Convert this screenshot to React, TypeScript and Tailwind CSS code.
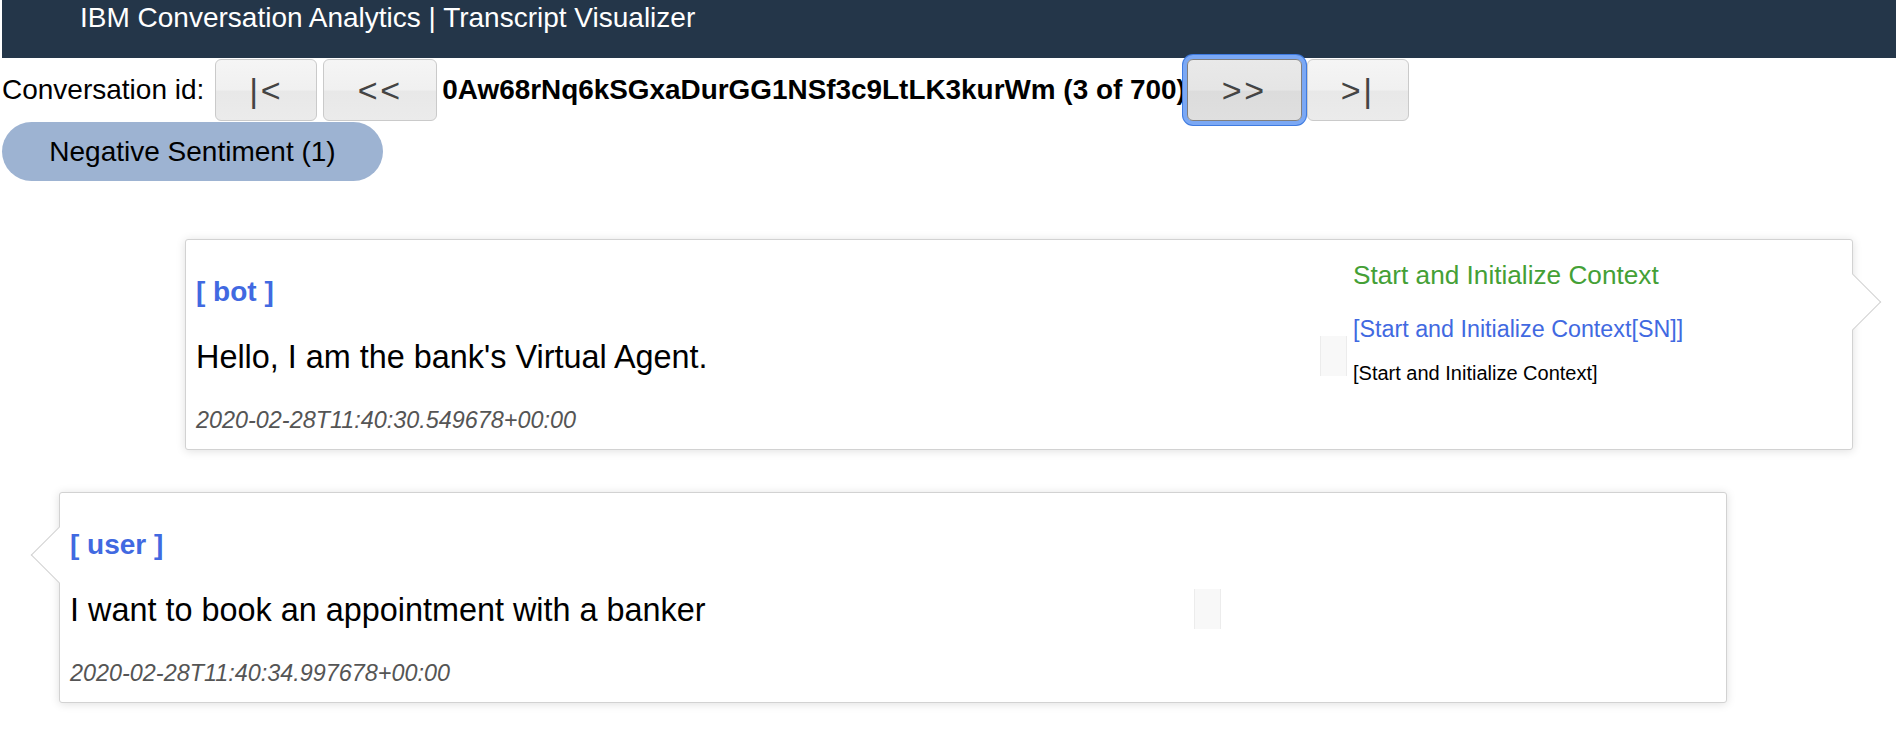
import React from "react";

function NavButton({
  className,
  children,
}: {
  className: string;
  children: React.ReactNode;
}) {
  return (
    <button
      type="button"
      className={
        "flex h-[62px] shrink-0 items-center justify-center rounded-[6px] border text-[34px] leading-none tracking-[0.08em] text-[#444] " +
        className
      }
    >
      {children}
    </button>
  );
}

const plainBtn =
  "border-[#cacaca] bg-[linear-gradient(#f5f5f5_0%,#f0f0f0_50%,#e8e8e8_52%,#ebebeb_100%)]";
const focusBtn =
  "relative z-10 border-[#7f7f7f] bg-[linear-gradient(#e9e9e9_0%,#e5e5e5_50%,#dcdcdc_52%,#dfdfdf_100%)] shadow-[0_0_0_4px_#7ba8f4,0_0_0_5px_#3f7be0]";

function Card({
  wrap,
  arrow,
  label,
  text,
  time,
  right,
}: {
  wrap: string;
  arrow: string;
  label: string;
  text: string;
  time: string;
  right?: boolean;
}) {
  return (
    <div
      className={
        "relative w-[1668px] rounded-[3px] border border-[#d2d2d2] bg-white shadow-[0_1px_10px_rgba(0,0,0,0.13)] " +
        wrap
      }
    >
      <div className={"absolute top-[42px] h-[40px] w-[40px] rotate-45 border-[#d2d2d2] bg-white " + arrow} />
      <div className="relative flex px-[10px]">
        <div className="w-[1124px] shrink-0 pb-[16px] pt-[36px]">
          <p className="text-[28px] font-bold leading-[32px] text-[#4169e1]">{label}</p>
          <p className="mt-[31px] text-[32.4px] leading-[37px]">{text}</p>
          <p className="mt-[31px] text-[23.4px] italic leading-[26px] text-[#555]">{time}</p>
        </div>
        <div className="mt-[96px] h-[40px] w-[27px] shrink-0 border-x border-[#ececec] bg-[#f8f8f8]" />
        {right && (
          <div className="ml-[6px] pt-[20px]">
            <p className="text-[26.2px] leading-[30px] text-[#44a036]">Start and Initialize Context</p>
            <p className="mt-[26px] text-[23.3px] leading-[26px] text-[#4169e1]">
              [Start and Initialize Context[SN]]
            </p>
            <p className="mt-[20px] text-[20px] leading-[23px] text-black">[Start and Initialize Context]</p>
          </div>
        )}
      </div>
    </div>
  );
}

export default function App() {
  return (
    <div className="min-h-[732px] bg-white pl-[2px] font-['Liberation_Sans',Arial,sans-serif] text-black">
      <header className="h-[58px] bg-[#243649] pl-[78px] pt-[2px]">
        <h1 className="text-[28px] font-normal leading-[32px] text-white">
          IBM Conversation Analytics | Transcript Visualizer
        </h1>
      </header>

      <div className="mt-[1px] flex h-[62px] items-center">
        <span className="text-[28px] leading-[32px]">Conversation id:</span>
        <NavButton className={"ml-[11px] w-[102px] " + plainBtn}>|&lt;</NavButton>
        <NavButton className={"ml-[6px] w-[114px] " + plainBtn}>&lt;&lt;</NavButton>
        <span className="ml-[5px] text-[27.9px] font-bold leading-[32px]">
          0Aw68rNq6kSGxaDurGG1NSf3c9LtLK3kurWm (3 of 700)
        </span>
        <NavButton className={"ml-[1px] w-[115px] " + focusBtn}>&gt;&gt;</NavButton>
        <NavButton className={"ml-[5px] w-[102px] " + plainBtn}>&gt;|</NavButton>
      </div>

      <div className="mt-[1px] flex h-[59px] w-[381px] items-center justify-center rounded-full bg-[#9db3d2]">
        <span className="text-[28px] leading-[32px]">Negative Sentiment (1)</span>
      </div>

      <div className="mt-[58px] flex flex-col pb-[28px]">
        <Card
          wrap="ml-[183px]"
          arrow="right-[-21px] border-r border-t"
          label="[ bot ]"
          text="Hello, I am the bank's Virtual Agent."
          time="2020-02-28T11:40:30.549678+00:00"
          right
        />
        <Card
          wrap="ml-[57px] mt-[42px]"
          arrow="left-[-21px] border-b border-l"
          label="[ user ]"
          text="I want to book an appointment with a banker"
          time="2020-02-28T11:40:34.997678+00:00"
        />
      </div>
    </div>
  );
}
